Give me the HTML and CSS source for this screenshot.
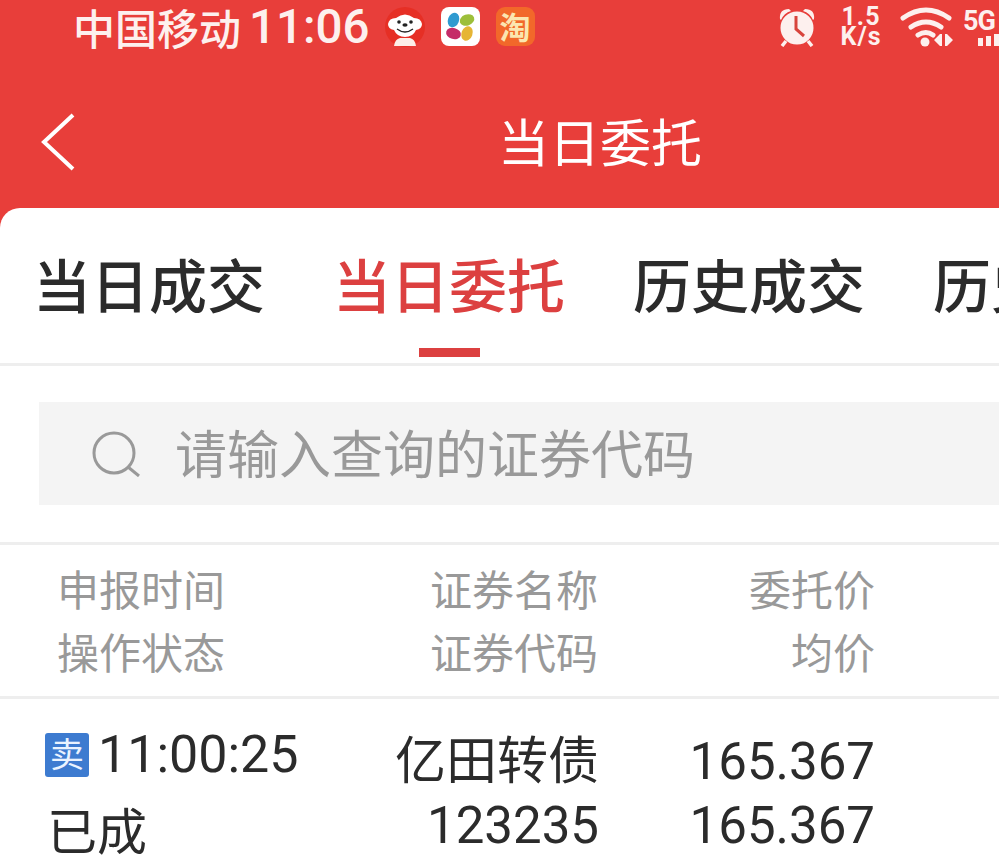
FILE: index.html
```html
<!DOCTYPE html>
<html lang="zh-CN">
<head>
  <meta charset="UTF-8">
  <title>当日委托</title>
  <link rel="stylesheet" href="styles.css">
</head>
<body>

<div class="top">
  <div class="status-bar">
    <span class="carrier">中国移动</span>
    <span class="clock">11:06</span>
    <svg class="jd-icon" width="40" height="40" viewBox="0 0 40 40">
      <circle cx="20" cy="20" r="20" fill="#e62f25"/>
      <path d="M3 17q1-6 8-6 9-7 18 0 7 0 8 6 0 5-6 6-3 7-11 7t-11-7q-6-1-6-6z" fill="#fff"/>
      <path d="M9 39q1-7 6-8h10q5 1 6 8z" fill="#fdeee8"/>
      <circle cx="14" cy="15" r="1.8" fill="#222"/>
      <circle cx="26" cy="15" r="1.8" fill="#222"/>
      <ellipse cx="20" cy="18" rx="2.6" ry="1.8" fill="#222"/>
      <path d="M12 22q8 6 16 0" fill="none" stroke="#222" stroke-width="1.3"/>
    </svg>
    <svg class="bean-icon" width="39" height="39" viewBox="0 0 39 39">
      <rect width="39" height="39" rx="8" fill="#fff"/>
      <ellipse cx="12.5" cy="13" rx="5.5" ry="7.5" fill="#2f9ad0" transform="rotate(20 12.5 13)"/>
      <ellipse cx="26" cy="13" rx="7.5" ry="5.5" fill="#9dbf3a" transform="rotate(-20 26 13)"/>
      <ellipse cx="12.5" cy="26.5" rx="7.5" ry="5.5" fill="#c52c68" transform="rotate(15 12.5 26.5)"/>
      <ellipse cx="26" cy="26.5" rx="5.5" ry="7.5" fill="#e6b535" transform="rotate(20 26 26.5)"/>
    </svg>
    <span class="taobao">淘</span>
    <span class="status-right">
      <svg class="alarm" width="40" height="40" viewBox="0 0 40 40">
        <circle cx="19" cy="21" r="15" fill="#fdf0ee" stroke="#fdf0ee" stroke-width="3"/>
        <path d="M18 9v13l8 7" fill="none" stroke="#d8443c" stroke-width="3"/>
        <path d="M2 12Q1 2 11 2l2 2Q6 6 3 13zM36 12Q37 2 27 2l-2 2q7 2 10 9z" fill="#fdf0ee"/>
        <path d="M8 34l-4 5M30 34l4 5" stroke="#fdf0ee" stroke-width="3.5"/>
      </svg>
      <span class="speed"><span>1.5</span><span>K/s</span></span>
      <svg class="wifi" width="54" height="40" viewBox="0 0 54 40">
        <g fill="none" stroke="#fdf0ee" stroke-width="5" stroke-linecap="round">
          <path d="M3 11q23-16 46 0"/>
          <path d="M11 20q15-10 30 0"/>
          <path d="M18 28q8-5 15 0"/>
        </g>
        <circle cx="25" cy="35" r="4.5" fill="#fdf0ee"/>
        <path d="M42 27v12h-2l-6-6 6-6zM45 27h2l6 6-6 6h-2z" fill="#fdf0ee"/>
      </svg>
      <span class="signal">
        <b>5G</b>
        <svg width="21" height="12" viewBox="0 0 21 12"><path d="M0 4h5v8H0zM8 2h5v10H8zM16 0h5v12h-5z" fill="#fdf0ee"/></svg>
      </span>
    </span>
  </div>
  <div class="nav-bar">
    <svg class="back" width="36" height="58" viewBox="0 0 36 58"><path d="M33 2L4 29l29 27" fill="none" stroke="#fff" stroke-width="4"/></svg>
    <h1>当日委托</h1>
  </div>
</div>

<div class="card">
  <div class="tabs">
    <span>当日成交</span>
    <span class="active">当日委托</span>
    <span>历史成交</span>
    <span>历史委托</span>
  </div>

  <div class="search-wrap">
    <div class="search">
      <svg width="50" height="46" viewBox="0 0 50 46"><circle cx="22" cy="22" r="20" fill="none" stroke="#999" stroke-width="3"/><path d="M36 36l11 9" stroke="#999" stroke-width="3"/></svg>
      <span>请输入查询的证券代码</span>
    </div>
  </div>

  <div class="table-head">
    <span>申报时间</span><span class="r">证券名称</span><span class="r">委托价</span>
    <span>操作状态</span><span class="r">证券代码</span><span class="r">均价</span>
  </div>

  <div class="order">
    <span class="time"><i class="badge">卖</i>11:00:25</span><span class="r">亿田转债</span><span class="r">165.367</span>
    <span class="state">已成</span><span class="r">123235</span><span class="r">165.367</span>
  </div>
</div>

</body>
</html>
```

FILE: styles.css
```css
body {
  margin: 0;
  height: 865px;
  overflow: hidden;
  background: #fff;
  font-family: "Noto Sans CJK SC", "Noto Sans", sans-serif;
  color: #2b2b2b;
}

.top {
  background: #e83e3a;
  height: 230px;
  color: #fdf0ee;
}

.status-bar {
  height: 53px;
  display: flex;
  align-items: center;
  padding-left: 73px;
}

.carrier {
  font-size: 42px;
  font-weight: 500;
  line-height: 53px;
}

.clock {
  font-family: Roboto, sans-serif;
  font-size: 47.5px;
  font-weight: 500;
  margin-left: 8px;
}

.jd-icon {
  margin-left: 15px;
  flex: none;
}

.bean-icon {
  margin-left: 16px;
  flex: none;
}

.taobao {
  margin-left: 16px;
  width: 39px;
  height: 39px;
  border-radius: 9px;
  background: #f2682a;
  color: #fbe6b0;
  font-size: 31px;
  font-weight: 700;
  line-height: 37px;
  text-align: center;
  flex: none;
}

.status-right {
  margin-left: auto;
  width: 221px;
  flex: none;
  display: flex;
  align-items: center;
}

.status-right svg { flex: none; }

.speed {
  font-family: Roboto, sans-serif;
  font-size: 25px;
  font-weight: 700;
  line-height: 20px;
  letter-spacing: 1px;
  width: 44px;
  margin-left: 21px;
  text-align: center;
  flex: none;
}

.speed span { display: block; }

.wifi { margin-left: 17px; }

.signal {
  display: flex;
  flex-direction: column;
  align-items: flex-end;
  margin-left: 9px;
  width: 36px;
  flex: none;
}

.signal b {
  align-self: flex-start;
  font-family: Roboto, sans-serif;
  font-size: 27px;
  line-height: 26px;
  letter-spacing: -1px;
}

.nav-bar {
  height: 177px;
  display: flex;
  align-items: center;
  padding: 0 0 0 40px;
  box-sizing: border-box;
}

.nav-bar h1 {
  margin: 0 0 4px 422px;
  font-size: 51px;
  font-weight: 400;
  color: #fff;
  line-height: 60px;
}

.card {
  background: #fff;
  margin-top: -22px;
  border-radius: 20px 0 0 0;
  height: 657px;
  position: relative;
  overflow: hidden;
}

.tabs {
  height: 158px;
  border-bottom: 3px solid #eee;
  box-sizing: border-box;
  display: flex;
  gap: 68px;
  padding-left: 33px;
  white-space: nowrap;
  font-size: 58px;
  font-weight: 500;
  line-height: 150px;
  overflow: hidden;
}

.tabs span {
  flex: none;
  position: relative;
}

.tabs .active { color: #dc4040; }

.tabs .active::after {
  content: "";
  position: absolute;
  left: 86px;
  top: 140px;
  width: 61px;
  height: 9px;
  background: #dc4040;
}

.search-wrap {
  padding: 36px 0 37px 39px;
  border-bottom: 3px solid #eee;
}

.search {
  height: 103px;
  background: #f4f4f4;
  display: flex;
  align-items: center;
  padding-left: 53px;
  gap: 33px;
  font-size: 52px;
  line-height: 94px;
  color: #999;
}

.search span { margin-bottom: 4px; }

.search svg { flex: none; }

.table-head,
.order {
  display: grid;
  white-space: nowrap;
}

.table-head {
  grid-template-columns: 342px 199px 277px;
  padding: 11px 0 14px 57px;
  font-size: 42px;
  color: #999;
  line-height: 63px;
  border-bottom: 3px solid #eee;
}

.r { text-align: right; }

.order {
  grid-template-columns: 350px 204px 276px;
  padding: 31px 0 0 45px;
  font-size: 51px;
  line-height: 64px;
}

.order > span {
  font-family: Roboto, "Noto Sans CJK SC", sans-serif;
}

.time {
  display: flex;
  align-items: center;
  gap: 9px;
  margin-top: -8px;
  height: 65px;
  font-size: 52px;
}

.badge {
  width: 44px;
  height: 44px;
  flex: none;
  border-radius: 3px;
  background: #3d7bd0;
  color: #eaf3ff;
  font-size: 34px;
  font-style: normal;
  line-height: 44px;
  text-align: center;
}

.state {
  padding-left: 2px;
  margin-top: 7px;
  font-size: 50px;
}
```
